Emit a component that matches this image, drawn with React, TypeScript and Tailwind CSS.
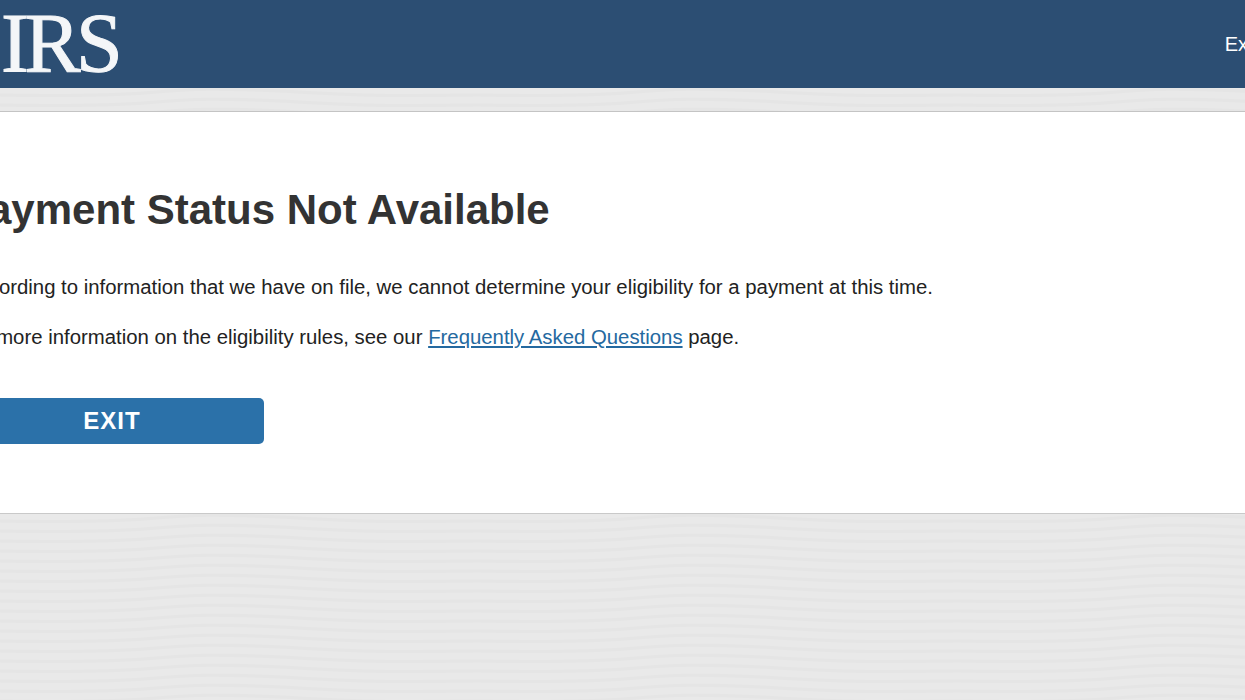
const sans = "font-['Liberation_Sans',Arial,sans-serif]";

// faint wavy texture behind the grey bands
function WaveTexture({ id }: { id: string }) {
  return (
    <svg className="absolute inset-0 h-full w-full" aria-hidden="true">
      <defs>
        <pattern id={id} width="480" height="10" patternUnits="userSpaceOnUse" patternTransform="translate(0 1)">
          <rect width="480" height="10" fill="#e9e9e9" />
          <path
            d="M0 6C60 7 110 7 150 3.500S220 -1 280 2 360 7 420 6.500 470 6 480 6"
            fill="none"
            stroke="#e5e5e5"
            strokeWidth="3"
          />
          <path
            d="M0 -4C60 -3 110 -3 150 -6.500S220 -11 280 -8 360 -3 420 -3.500 470 -4 480 -4M0 16C60 17 110 17 150 13.500S220 9 280 12 360 17 420 16.500 470 16 480 16"
            fill="none"
            stroke="#e5e5e5"
            strokeWidth="3"
          />
        </pattern>
      </defs>
      <rect width="100%" height="100%" fill={`url(#${id})`} />
    </svg>
  );
}

export default function App() {
  return (
    <div className={`flex h-[700px] w-[1245px] flex-col overflow-hidden bg-white ${sans}`}>
      <header className="flex h-[88px] shrink-0 items-center justify-between bg-[#2c4e73]">
        <span className="ml-[1px] mt-[-1px] font-['Liberation_Serif',serif] text-[84px] leading-none tracking-[-4.500px] text-[#f4f6f8] [-webkit-text-stroke:1px_#f4f6f8]">
          IRS
        </span>
        <a className="mr-[-13px] text-[20px] text-white">Exit</a>
      </header>

      <div className="relative h-[24px] shrink-0 border-b border-[#c4c4c4]">
        <WaveTexture id="wave-top" />
      </div>

      <main className="h-[402px] shrink-0 border-b border-[#c9c9c9] bg-white pt-[70px] text-[#222]">
        <div className="ml-[-40px]">
          <h1 className="whitespace-nowrap text-[42px] font-bold leading-[56px] text-[#333]">
            Payment Status Not Available
          </h1>
          <p className="ml-[5px] mt-[35px] whitespace-nowrap text-[20.35px] leading-[28px]">
            According to information that we have on file, we cannot determine your eligibility for a payment at this time.
          </p>
          <p className="mt-[22px] whitespace-nowrap text-[20.35px] leading-[28px]">
            For more information on the eligibility rules, see our{" "}
            <a className="text-[#2469a0] underline">Frequently Asked Questions</a> page.
          </p>
          <button className="mt-[47px] flex h-[46px] w-[304px] items-center justify-center rounded-[5px] bg-[#2b71a9] text-[24px] font-bold tracking-[1px] text-white">
            EXIT
          </button>
        </div>
      </main>

      <footer className="relative grow">
        <WaveTexture id="wave-bottom" />
      </footer>
    </div>
  );
}
